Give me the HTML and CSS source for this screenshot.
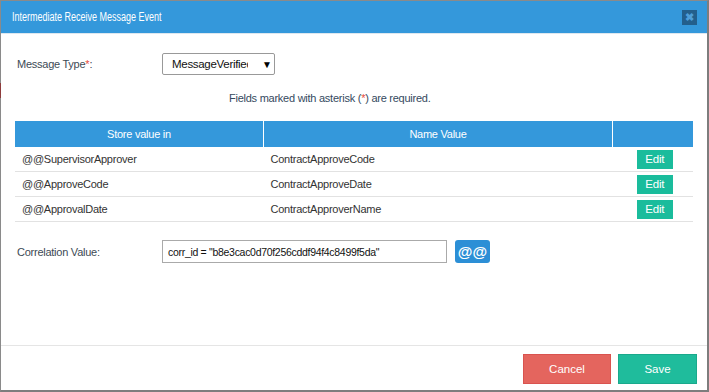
FILE: index.html
```html
<!DOCTYPE html>
<html>
<head>
<meta charset="utf-8">
<link rel="stylesheet" href="styles.css">
</head>
<body>
<div class="dialog">
  <div class="header">
    <span class="title">Intermediate Receive Message Event</span>
    <span class="close">&#x2716;</span>
  </div>
  <div class="body">
    <div class="row-type">
      <label class="label">Message Type<span class="req">*</span>:</label>
      <div class="select"><span class="sel-text">MessageVerified</span><span class="arrow">&#9660;</span></div>
    </div>
    <div class="note">Fields marked with asterisk (<span class="req">*</span>) are required.</div>
    <table class="grid">
      <thead>
        <tr><th class="c1">Store value in</th><th class="c2">Name Value</th><th class="c3"></th></tr>
      </thead>
      <tbody>
        <tr><td>@@SupervisorApprover</td><td>ContractApproveCode</td><td class="act"><span class="edit">Edit</span></td></tr>
        <tr><td>@@ApproveCode</td><td>ContractApproveDate</td><td class="act"><span class="edit">Edit</span></td></tr>
        <tr><td>@@ApprovalDate</td><td>ContractApproverName</td><td class="act"><span class="edit">Edit</span></td></tr>
      </tbody>
    </table>
    <div class="row-corr">
      <label class="label">Correlation Value:</label>
      <div class="input">corr_id = "b8e3cac0d70f256cddf94f4c8499f5da"</div>
      <span class="at">@@</span>
    </div>
  </div>
  <div class="footer">
    <span class="btn cancel">Cancel</span>
    <span class="btn save">Save</span>
  </div>
</div>
</body>
</html>
```
FILE: styles.css
```css
html, body {
  margin: 0;
  padding: 0;
  background: #fff;
}
body {
  font-family: "Liberation Sans", Arial, sans-serif;
  font-size: 11px;
  letter-spacing: -0.25px;
  color: #333;
}
.dialog {
  box-sizing: border-box;
  width: 709px;
  height: 392px;
  border-top: 1px solid #8a8a8a;
  border-left: 1px solid #8a8a8a;
  border-right: 2px solid #7d7d7d;
  border-bottom: 2px solid #7d7d7d;
  display: flex;
  flex-direction: column;
  position: relative;
}
.dialog::before {
  content: "";
  position: absolute;
  left: -1px;
  top: 82px;
  width: 1px;
  height: 15px;
  background: #8e3c3c;
}
.header {
  height: 32px;
  background: #3498db;
  border-bottom: 1px solid #dde7ef;
  display: flex;
  align-items: center;
  justify-content: space-between;
  padding: 0 10px 0 11px;
}
.title {
  display: inline-block;
  color: #fff;
  font-size: 12px;
  letter-spacing: 0;
  transform: scaleX(0.75);
  transform-origin: left center;
  white-space: nowrap;
}
.close {
  width: 15px;
  height: 15px;
  background: #235f8c;
  color: #4f9ed8;
  font-size: 11px;
  font-weight: bold;
  display: flex;
  align-items: center;
  justify-content: center;
  line-height: 1;
  margin-top: 1px;
  letter-spacing: 0;
}
.body {
  flex: 1;
  padding: 19px 15px 0 14px;
}
.row-type, .row-corr {
  display: flex;
  align-items: center;
}
.label {
  width: 145px;
  padding-left: 2px;
  color: #3d4a55;
}
.req {
  color: #e74c3c;
}
.select {
  box-sizing: border-box;
  width: 113px;
  height: 22px;
  border: 1px solid #999;
  border-radius: 2px;
  display: flex;
  align-items: center;
  padding-left: 9px;
  color: #111;
  font-size: 11.5px;
  letter-spacing: -0.3px;
}
.sel-text {
  flex: none;
  width: 76px;
  overflow: hidden;
  white-space: nowrap;
}
.arrow {
  font-size: 10px;
  margin-left: 14px;
  color: #000;
}
.note {
  margin-top: 15px;
  line-height: 16px;
  padding-left: 214px;
  color: #34495e;
}
.grid {
  margin-top: 15px;
  width: 678px;
  border-collapse: collapse;
  table-layout: fixed;
}
.grid th {
  background: #3498db;
  color: #fff;
  font-weight: normal;
  height: 26px;
  padding: 0;
  border-left: 1px solid #fff;
  text-align: center;
}
.grid th.c1 { width: 248px; border-left: none; }
.grid th.c2 { width: 348px; }
.grid th.c3 { width: 80px; }
.grid td {
  height: 24px;
  padding: 0 0 0 7px;
  border-bottom: 1px solid #e2e2e2;
  color: #333;
}
.grid td.act {
  padding: 0;
  text-align: center;
}
.edit {
  display: inline-block;
  width: 36px;
  height: 19px;
  line-height: 19px;
  background: #1abc9c;
  color: #fff;
  text-align: center;
  vertical-align: middle;
  margin-left: 4px;
  font-size: 11.5px;
}
.row-corr {
  margin-top: 18px;
}
.input {
  box-sizing: border-box;
  width: 285px;
  height: 23px;
  border: 1px solid #aaa;
  padding-left: 5px;
  display: flex;
  align-items: center;
  color: #111;
  white-space: nowrap;
  font-size: 10.5px;
  letter-spacing: -0.3px;
}
.at {
  margin-left: 8px;
  width: 35px;
  height: 23px;
  border-radius: 3px;
  background: #2c8fd6;
  color: #fff;
  font-size: 15px;
  font-weight: bold;
  letter-spacing: 0;
  display: flex;
  align-items: center;
  justify-content: center;
}
.footer {
  box-sizing: border-box;
  height: 45px;
  border-top: 1px solid #e5e5e5;
  display: flex;
  justify-content: flex-end;
  align-items: flex-start;
  padding: 8px 10px 0 0;
  gap: 7px;
}
.btn {
  box-sizing: border-box;
  height: 30px;
  display: flex;
  align-items: center;
  justify-content: center;
  color: #fff;
  font-size: 11.5px;
  letter-spacing: 0;
}
.cancel {
  width: 88px;
  background: #e4655e;
  border: 1px solid #d9534f;
}
.save {
  width: 79px;
  background: #1fbc9c;
  border: 1px solid #1aa98c;
}
```
